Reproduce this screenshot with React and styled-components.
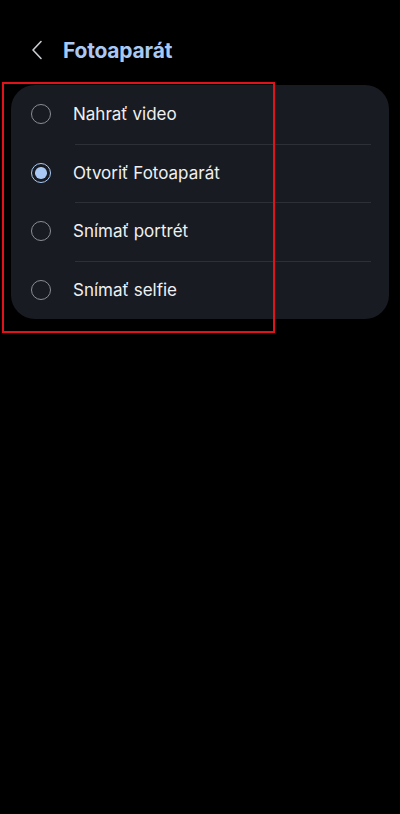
import React, { useState } from "react";
import styled, { createGlobalStyle } from "styled-components";

const GlobalStyle = createGlobalStyle`
  html, body {
    margin: 0;
    padding: 0;
    background: #000;
  }
  body {
    font-family: Inter, Roboto, "Noto Sans", "Liberation Sans", sans-serif;
    -webkit-font-smoothing: antialiased;
  }
`;

const options = [
  "Nahrať video",
  "Otvoriť Fotoaparát",
  "Snímať portrét",
  "Snímať selfie",
];

export default function App() {
  const [selected, setSelected] = useState(1);

  return (
    <Screen>
      <GlobalStyle />
      <Header>
        <BackButton aria-label="Späť">
          <svg width="12" height="20" viewBox="0 0 12 20" fill="none">
            <path
              d="M10 1.5 L2 10 L10 18.5"
              stroke="#c9ccd2"
              strokeWidth="1.6"
              strokeLinecap="round"
              strokeLinejoin="round"
            />
          </svg>
        </BackButton>
        <Title>Fotoaparát</Title>
      </Header>

      <CardWrap>
        <Card>
          {options.map((label, index) => (
            <Row
              key={label}
              $first={index === 0}
              onClick={() => setSelected(index)}
            >
              <Radio $checked={selected === index} />
              <Label>{label}</Label>
            </Row>
          ))}
        </Card>
        <Highlight />
      </CardWrap>
    </Screen>
  );
}

const Screen = styled.div`
  width: 400px;
  min-height: 814px;
  background: #000;
  box-sizing: border-box;
  padding-top: 32px;
`;

const Header = styled.div`
  display: flex;
  align-items: center;
  height: 36px;
  padding-left: 30px;
  gap: 19px;
`;

const BackButton = styled.button`
  display: flex;
  align-items: center;
  justify-content: center;
  width: 14px;
  height: 24px;
  padding: 0;
  border: none;
  background: none;
  cursor: pointer;
`;

const Title = styled.h1`
  margin: 0;
  font-size: 21px;
  font-weight: 700;
  color: #a9c9f4;
  letter-spacing: -0.2px;
`;

const CardWrap = styled.div`
  position: relative;
  margin-top: 17px;
  padding: 0 11px;
`;

const Card = styled.div`
  background: #181b21;
  border-radius: 24px;
  overflow: hidden;
`;

const Row = styled.div`
  position: relative;
  display: flex;
  align-items: center;
  height: 58.5px;
  padding-left: 20px;
  gap: 22px;
  cursor: pointer;

  &::before {
    content: "";
    display: ${(p) => (p.$first ? "none" : "block")};
    position: absolute;
    top: 0;
    left: 64px;
    right: 18px;
    height: 1px;
    background: #2d3137;
  }
`;

const Radio = styled.span`
  position: relative;
  width: 20px;
  height: 20px;
  box-sizing: border-box;
  border-radius: 50%;
  border: 1.6px solid ${(p) => (p.$checked ? "#a9c9f4" : "#8b8e94")};
  flex-shrink: 0;

  &::after {
    content: "";
    display: ${(p) => (p.$checked ? "block" : "none")};
    position: absolute;
    inset: 3.2px;
    border-radius: 50%;
    background: #a9c9f4;
  }
`;

const Label = styled.span`
  font-size: 17px;
  color: #eef0f3;
`;

const Highlight = styled.div`
  position: absolute;
  left: 2px;
  top: -3px;
  width: 273px;
  height: 251px;
  box-sizing: border-box;
  border: 2px solid #e0131b;
  pointer-events: none;
`;
